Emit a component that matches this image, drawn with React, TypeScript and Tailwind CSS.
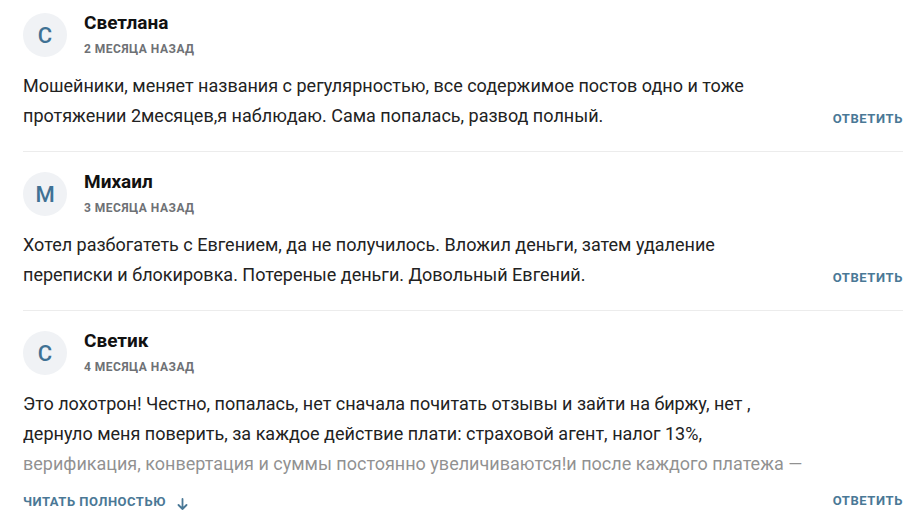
const comments = [
  {
    letter: "С",
    name: "Светлана",
    date: "2 месяца назад",
    text: "Мошейники, меняет названия с регулярностью, все содержимое постов одно и тоже протяжении 2месяцев,я наблюдаю. Сама попалась, развод полный.",
  },
  {
    letter: "М",
    name: "Михаил",
    date: "3 месяца назад",
    text: "Хотел разбогатеть с Евгением, да не получилось. Вложил деньги, затем удаление переписки и блокировка. Потереные деньги. Довольный Евгений.",
  },
  {
    letter: "С",
    name: "Светик",
    date: "4 месяца назад",
    text: "Это лохотрон! Честно, попалась, нет сначала почитать отзывы и зайти на биржу, нет , дернуло меня поверить, за каждое действие плати: страховой агент, налог 13%, верификация, конвертация и суммы постоянно увеличиваются!и после каждого платежа — новые платежи. Деньги так и не вернули.",
    long: true,
  },
];

function Header({ letter, name, date }: { letter: string; name: string; date: string }) {
  return (
    <div className="flex items-start gap-[17px]">
      <div className="w-11 h-11 rounded-full bg-[#f0f2f5] flex items-center justify-center text-[22px] font-medium text-[#3f7194]">
        {letter}
      </div>
      <div className="flex flex-col">
        <div className="text-[19px] leading-5 font-bold text-[#111]">{name}</div>
        <div className="mt-2 text-[12px] leading-4 font-bold uppercase tracking-[0.5px] text-[#6e7175]">
          {date}
        </div>
      </div>
    </div>
  );
}

function Reply() {
  return (
    <button className="text-[13px] leading-5 font-bold uppercase tracking-[0.6px] text-[#4a7896]">
      Ответить
    </button>
  );
}

export default function App() {
  return (
    <div className="w-[923px] h-[525px] overflow-hidden bg-white font-['Roboto',sans-serif] pl-[23px] pr-[20px]">
      {comments.map((c, i) => (
        <div
          key={i}
          className={
            (i === 0 ? "pt-[13px] " : "pt-5 ") +
            (c.long ? "" : "pb-5 border-b border-[#ececec]")
          }
        >
          <Header letter={c.letter} name={c.name} date={c.date} />
          {c.long ? (
            <>
              <div className="relative mt-[14px] w-[782px] h-[90px] overflow-hidden text-[18px] leading-[30px] text-[#222]">
                {c.text}
                <div className="absolute left-0 right-0 top-[60px] h-[30px] bg-white/50" />
              </div>
              <div className="mt-[10px] flex items-center justify-between">
                <button className="flex items-center gap-[11px] pt-[3px] text-[13px] leading-5 font-bold uppercase tracking-[0.5px] text-[#4a7896]">
                  Читать полностью
                  <svg width="11" height="12" viewBox="0 0 11 12" fill="none" stroke="#4a7896" strokeWidth="1.8" strokeLinecap="round" strokeLinejoin="round" className="mt-[3px]">
                    <path d="M5.5 1v10M1.5 7l4 4 4-4" />
                  </svg>
                </button>
                <Reply />
              </div>
            </>
          ) : (
            <div className="mt-[14px] flex items-end justify-between">
              <div className="w-[782px] text-[18px] leading-[30px] text-[#222]">{c.text}</div>
              <div className="pb-[1px]">
                <Reply />
              </div>
            </div>
          )}
        </div>
      ))}
    </div>
  );
}
